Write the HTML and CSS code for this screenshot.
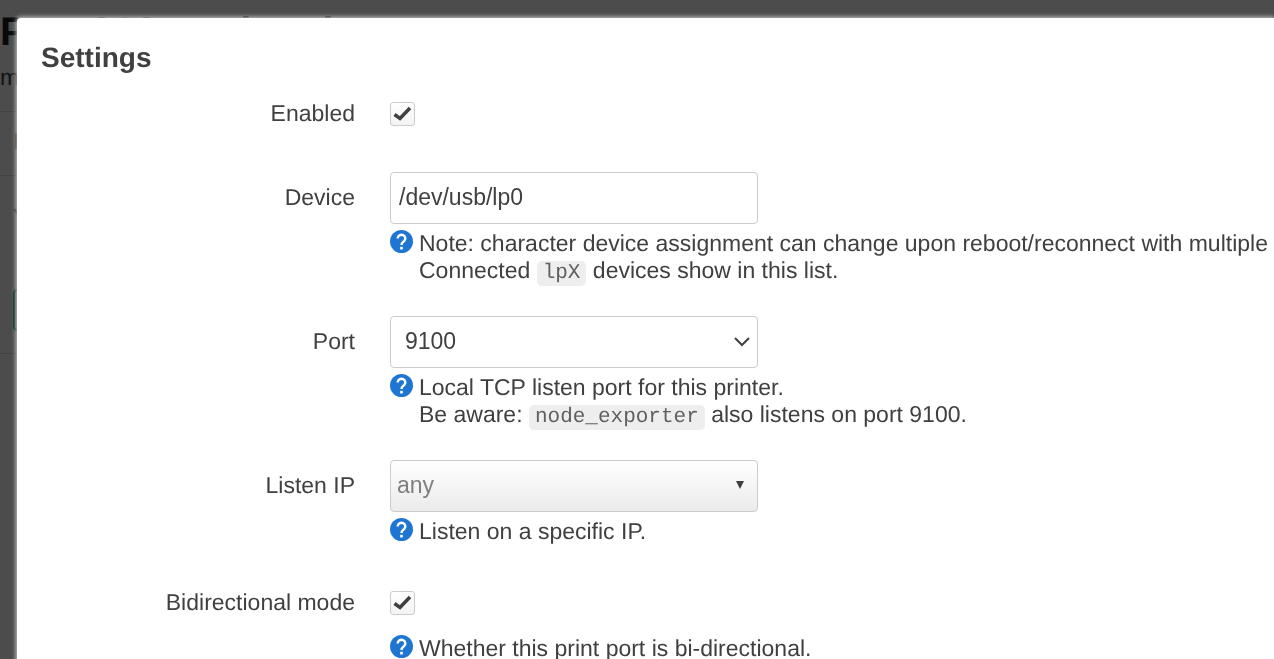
FILE: index.html
```html
<!DOCTYPE html>
<html lang="en">
<head>
    <meta charset="UTF-8">
    <meta name="viewport" content="width=device-width, initial-scale=1.0">
    <title>Settings</title>
    <link rel="stylesheet" href="styles.css">
</head>
<body>
    <!-- Page under the dialog -->
    <div class="page" aria-hidden="true">
        <h2 class="page-title">Port 910 – related</h2>
        <p class="page-descr">ma</p>
        <div class="page-row head">I</div>
        <div class="page-row body"><span>Y</span><div class="page-button"></div></div>
    </div>

    <div class="overlay">
        <form class="modal">
            <h4>Settings</h4>

            <div class="row">
                <label for="enabled">Enabled</label>
                <div class="field">
                    <div class="control">
                        <span class="check">
                            <input type="checkbox" id="enabled" checked>
                            <svg viewBox="0 0 25 24"><path d="M4.500 12.500l5.500 4 10-10.500"/></svg>
                        </span>
                    </div>
                </div>
            </div>

            <div class="row">
                <label for="device">Device</label>
                <div class="field">
                    <div class="control">
                        <input type="text" id="device" class="box" value="/dev/usb/lp0">
                    </div>
                    <div class="help">
                        <svg class="help-icon" viewBox="0 0 24 24"><circle cx="12" cy="12" r="12"/><path d="M8 8.800a4 3.800 0 1 1 6.600 2.900c-1.400 1.200-2.600 1.800-2.600 4"/><rect x="10.600" y="17.500" width="2.800" height="2.800"/></svg>
                        <div>Note: character device assignment can change upon reboot/reconnect with multiple USB<br>Connected <code>lpX</code> devices show in this list.</div>
                    </div>
                </div>
            </div>

            <div class="row">
                <label for="port">Port</label>
                <div class="field">
                    <div class="control">
                        <span class="drop">
                            <select id="port" class="box port"><option>9100</option><option>9101</option></select>
                            <svg class="chevron" viewBox="0 0 16 10"><path d="M1 1l7 7 7-7"/></svg>
                        </span>
                    </div>
                    <div class="help">
                        <svg class="help-icon" viewBox="0 0 24 24"><circle cx="12" cy="12" r="12"/><path d="M8 8.800a4 3.800 0 1 1 6.600 2.900c-1.400 1.200-2.600 1.800-2.600 4"/><rect x="10.600" y="17.500" width="2.800" height="2.800"/></svg>
                        <div>Local TCP listen port for this printer.<br>Be aware: <code>node_exporter</code> also listens on port 9100.</div>
                    </div>
                </div>
            </div>

            <div class="row">
                <label for="bind">Listen IP</label>
                <div class="field">
                    <div class="control">
                        <span class="drop">
                            <select id="bind" class="box bind"><option>any</option></select>
                            <svg class="arrow" viewBox="0 0 8 8"><path d="M0 0h8l-4 8z"/></svg>
                        </span>
                    </div>
                    <div class="help">
                        <svg class="help-icon" viewBox="0 0 24 24"><circle cx="12" cy="12" r="12"/><path d="M8 8.800a4 3.800 0 1 1 6.600 2.900c-1.400 1.200-2.600 1.800-2.600 4"/><rect x="10.600" y="17.500" width="2.800" height="2.800"/></svg>
                        <div>Listen on a specific IP.</div>
                    </div>
                </div>
            </div>

            <div class="row">
                <label for="bidirectional">Bidirectional mode</label>
                <div class="field">
                    <div class="control">
                        <span class="check">
                            <input type="checkbox" id="bidirectional" checked>
                            <svg viewBox="0 0 25 24"><path d="M4.500 12.500l5.500 4 10-10.500"/></svg>
                        </span>
                    </div>
                    <div class="help">
                        <svg class="help-icon" viewBox="0 0 24 24"><circle cx="12" cy="12" r="12"/><path d="M8 8.800a4 3.800 0 1 1 6.600 2.900c-1.400 1.200-2.600 1.800-2.600 4"/><rect x="10.600" y="17.500" width="2.800" height="2.800"/></svg>
                        <div>Whether this print port is bi-directional.</div>
                    </div>
                </div>
            </div>
        </form>
    </div>
</body>
</html>
```
FILE: styles.css
```css
* {
    box-sizing: border-box;
}

body {
    margin: 0;
    height: 100vh;
    overflow: hidden;
    background: #fff;
    color: #404040;
    font-family: "Liberation Sans", Arial, sans-serif;
    font-size: 23px;
    line-height: 27px;
    text-rendering: geometricPrecision;
}

/* page under the dialog */
.page-title {
    margin: 0;
    padding-top: 8px;
    color: #202020;
    font-size: 40px;
    line-height: 48px;
}

.page-descr {
    margin: 0;
    padding: 8px 0 20px;
}

.page-row {
    border-top: 1px solid #ddd;
    padding-left: 13px;
}

.page-row.head {
    height: 64px;
    padding-top: 16px;
}

.page-row.body {
    height: 179px;
    padding-top: 28px;
    border-bottom: 1px solid #ddd;
}

.page-button {
    width: 120px;
    height: 42px;
    margin-top: 58px;
    border: 2px solid #00a060;
    border-radius: 4px;
}

/* dialog */
.overlay {
    position: fixed;
    inset: 0;
    overflow: hidden;
    background: rgba(0, 0, 0, .7);
    padding: 18px 0 0 17px;
}

.modal {
    min-height: 100%;
    padding: 23px 0 24px 24px;
    background: #fff;
    border-radius: 4px 0 0 0;
    box-shadow: 0 0 4px 1px #ccc;
}

h4 {
    margin: 0 0 14px;
    font-size: 28px;
    line-height: 33px;
}

.row {
    display: flex;
    gap: 35px;
    margin-bottom: 32px;
}

.row > label {
    flex: 0 0 314px;
    text-align: right;
    line-height: 50px;
}

.field {
    flex: 1;
    min-width: 0;
}

.control {
    display: flex;
    align-items: center;
    height: 52px;
}

.box {
    width: 368px;
    height: 52px;
    padding: 0 8px 2px;
    border: 1px solid #ccc;
    border-radius: 4px;
    background: #fff;
    color: #404040;
    font: inherit;
    appearance: none;
}

.box.port {
    padding-left: 14px;
}

.box.bind {
    padding-left: 6px;
    color: #808080;
    background: linear-gradient(#fff, #ebebeb);
}

.drop,
.check {
    display: grid;
    align-items: center;
}

.drop > *,
.check > * {
    grid-area: 1 / 1;
}

.drop svg {
    justify-self: end;
    pointer-events: none;
}

.chevron {
    width: 16px;
    height: 10px;
    margin-right: 8px;
    fill: none;
    stroke: #404040;
    stroke-width: 2;
}

.arrow {
    width: 8px;
    height: 8px;
    margin: 0 14px 2px 0;
    fill: #404040;
}

.check input {
    width: 25px;
    height: 24px;
    margin: 0;
    border: 1px solid #ccc;
    border-radius: 3px;
    background: linear-gradient(#fff, #f3f3f3);
    appearance: none;
}

.check svg {
    width: 25px;
    height: 24px;
    fill: none;
    stroke: #404040;
    stroke-width: 3.5;
    pointer-events: none;
}

.help {
    display: flex;
    gap: 6px;
    margin-top: 6px;
    white-space: nowrap;
}

.help-icon {
    flex: none;
    width: 23px;
    height: 23px;
    fill: #1f76d2;
}

.help-icon path {
    fill: none;
    stroke: #fff;
    stroke-width: 2.5;
}

.help-icon rect {
    fill: #fff;
}

code {
    padding: 1px 6px;
    border-radius: 5px;
    background: #eee;
    color: #606060;
    font-family: "Liberation Mono", "Courier New", monospace;
    font-size: 21px;
    line-height: 1;
}
```
